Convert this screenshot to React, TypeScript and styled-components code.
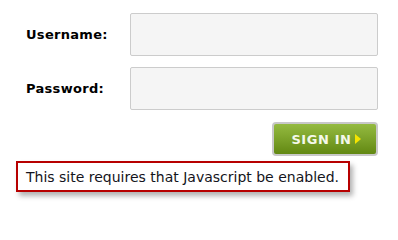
import React from 'react'
import styled, { createGlobalStyle } from 'styled-components'

const GlobalStyle = createGlobalStyle`
    html, body {
        margin: 0;
        padding: 0;
        background: #ffffff;
    }
    body {
        font-family: "DejaVu Sans", Verdana, sans-serif;
    }
`

const Page = styled.div`
    width: 398px;
    height: 207px;
    padding-top: 13px;
    box-sizing: border-box;
`

const Form = styled.form`
    display: grid;
    grid-template-columns: 104px 248px;
    row-gap: 11px;
    padding-left: 26px;
`

const Label = styled.label`
    display: flex;
    align-items: center;
    font-size: 13px;
    font-weight: bold;
    letter-spacing: 0.3px;
    color: #000;
`

const Input = styled.input`
    box-sizing: border-box;
    width: 248px;
    height: 43px;
    border: 1px solid #cccccc;
    border-radius: 2px;
    background: #f5f5f5;
    outline: none;
`

const Actions = styled.div`
    display: flex;
    justify-content: flex-end;
    width: 378px;
    margin-top: 12px;
`

const SignIn = styled.button`
    box-sizing: border-box;
    width: 106px;
    height: 34px;
    display: flex;
    align-items: center;
    justify-content: center;
    gap: 3px;
    padding: 0 0 0 2px;
    border: 2px solid #c8c8c8;
    border-radius: 4px;
    background: linear-gradient(to bottom, #94ba40 0%, #7ca22a 50%, #628812 100%);
    color: #f4f8ea;
    font-family: "DejaVu Sans", Verdana, sans-serif;
    font-weight: bold;
    font-size: 13px;
    letter-spacing: 0.6px;
    cursor: pointer;
`

const Arrow = styled.span`
    width: 0;
    height: 0;
    border-top: 5px solid transparent;
    border-bottom: 5px solid transparent;
    border-left: 6px solid #f5e400;
`

const Notice = styled.div`
    box-sizing: border-box;
    margin: 5px 0 0 16px;
    width: 334px;
    height: 31px;
    display: flex;
    align-items: center;
    padding-left: 8px;
    border: 2px solid #b70000;
    box-shadow: 3px 4px 5px rgba(0, 0, 0, 0.3);
    font-size: 14px;
    color: #141420;
    white-space: nowrap;
`

export default function App() {
    return (
        <>
            <GlobalStyle />
            <Page>
                <Form onSubmit={(e) => e.preventDefault()}>
                    <Label htmlFor="username">Username:</Label>
                    <Input id="username" type="text" />
                    <Label htmlFor="password">Password:</Label>
                    <Input id="password" type="password" />
                </Form>
                <Actions>
                    <SignIn type="button">
                        SIGN IN
                        <Arrow />
                    </SignIn>
                </Actions>
                <Notice>This site requires that Javascript be enabled.</Notice>
            </Page>
        </>
    )
}
